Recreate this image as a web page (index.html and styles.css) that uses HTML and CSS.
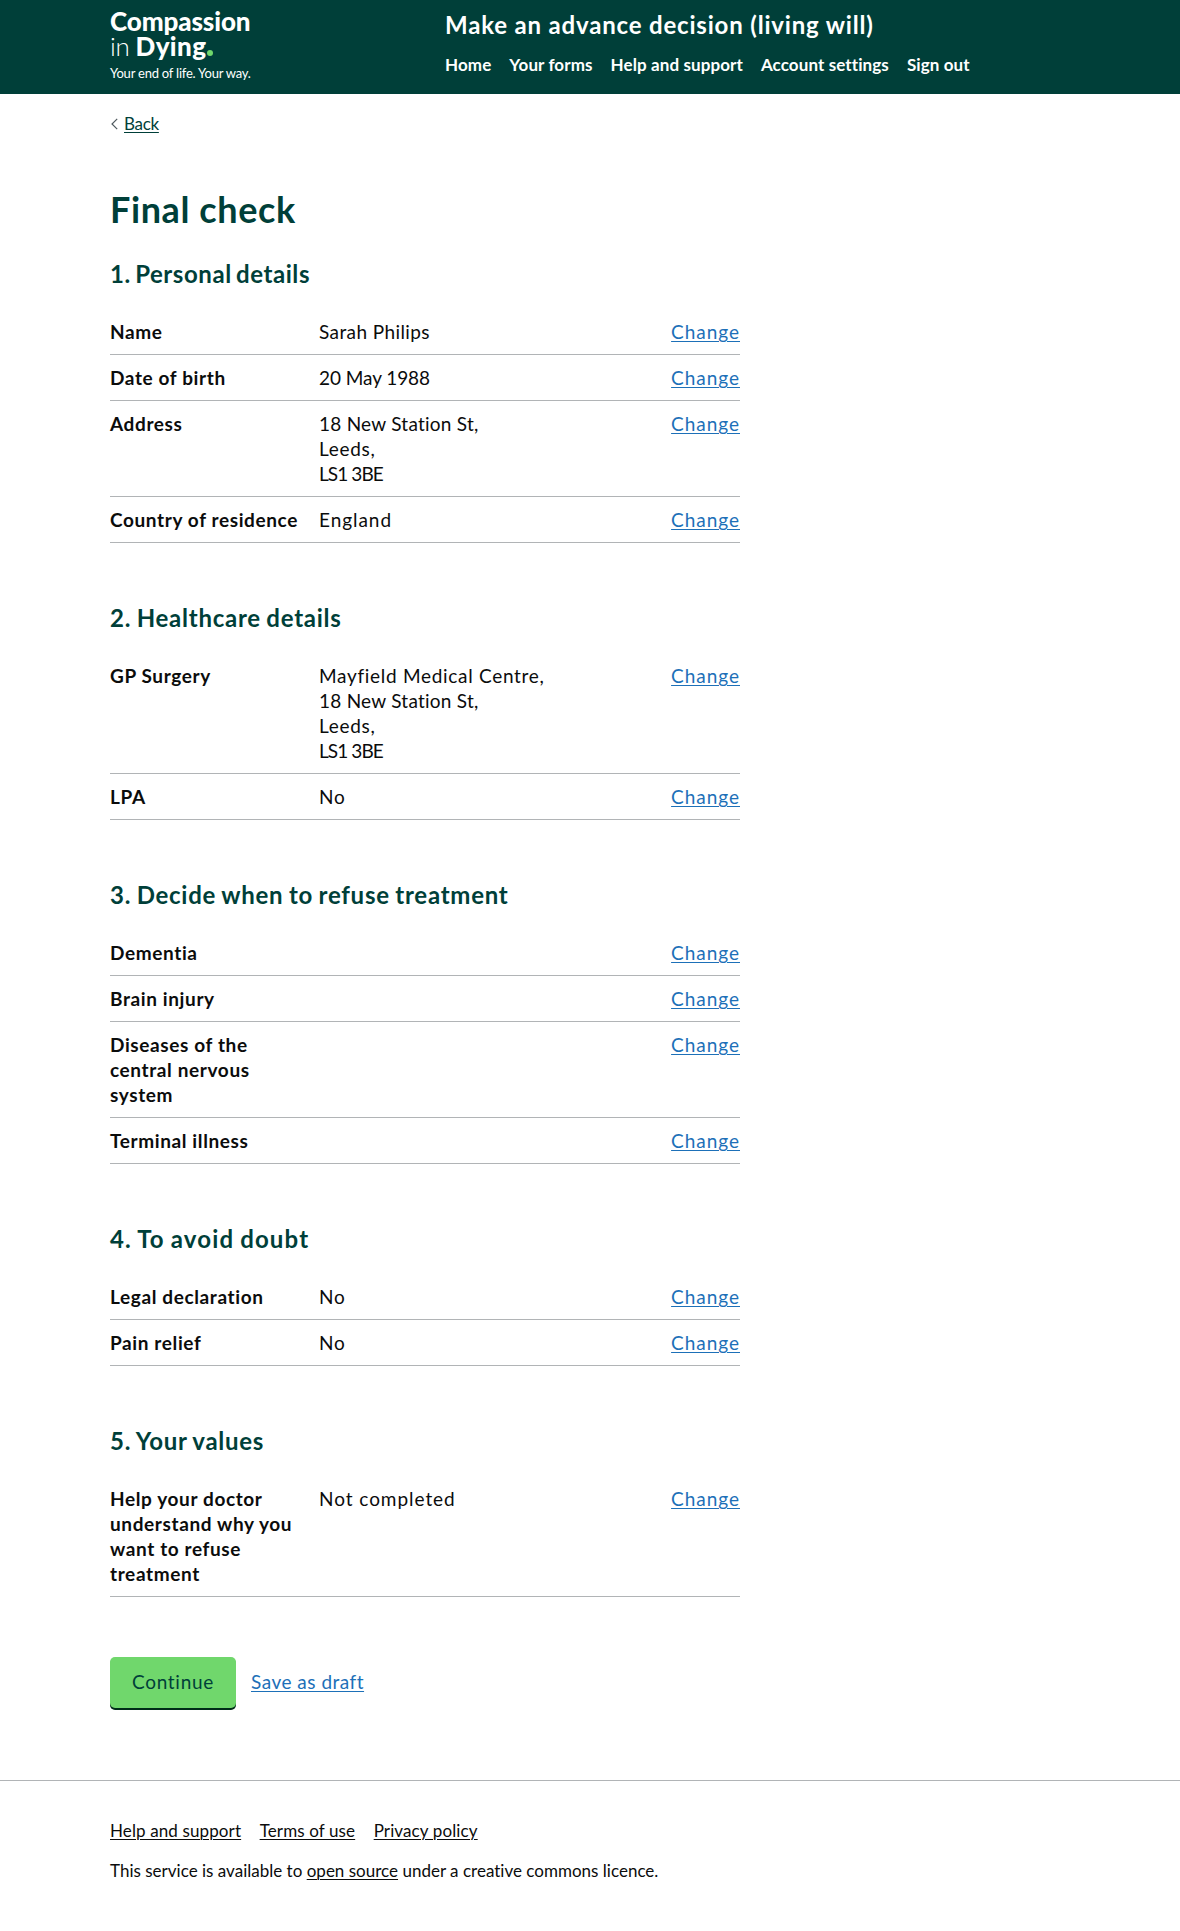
FILE: index.html
```html
<!DOCTYPE html>
<html lang="en">
<head>
<meta charset="utf-8">
<title>Final check – Make an advance decision (living will)</title>
<link rel="stylesheet" href="styles.css">
</head>
<body>
<header class="header">
  <div class="container header__inner">
    <a class="logo" href="#">
      <span class="logo__name">Compassion</span>
      <span class="logo__name"><span class="logo__light">in</span> <span class="logo__dying">Dying</span><span class="logo__dot"></span></span>
      <span class="logo__tagline">Your end of life. Your way.</span>
    </a>
    <div class="header__content">
      <a class="header__service" href="#">Make an advance decision (living will)</a>
      <nav class="nav">
        <a href="#">Home</a>
        <a href="#">Your forms</a>
        <a href="#">Help and support</a>
        <a href="#">Account settings</a>
        <a href="#">Sign out</a>
      </nav>
    </div>
  </div>
</header>

<div class="container">
  <a class="back" href="#"><svg class="back__icon" width="7" height="12" viewBox="0 0 7 12"><path d="M6.2 .8 1 6l5.2 5.2" fill="none" stroke="#505a5f" stroke-width="1.2"/></svg><span class="back__text">Back</span></a>

  <main class="main">
    <h1 class="title">Final check</h1>

    <section class="section">
      <h2 class="section__title section__title--personal">1. Personal details</h2>
      <dl class="summary">
        <div class="row"><dt class="key">Name</dt><dd class="value value--name">Sarah Philips</dd><dd class="action"><a class="link change" href="#">Change</a></dd></div>
        <div class="row"><dt class="key">Date of birth</dt><dd class="value value--date">20 May 1988</dd><dd class="action"><a class="link change" href="#">Change</a></dd></div>
        <div class="row"><dt class="key">Address</dt><dd class="value"><span class="street">18 New Station St,</span><br>Leeds,<br><span class="postcode">LS1 3BE</span></dd><dd class="action"><a class="link change" href="#">Change</a></dd></div>
        <div class="row"><dt class="key">Country of residence</dt><dd class="value value--wide">England</dd><dd class="action"><a class="link change" href="#">Change</a></dd></div>
      </dl>
    </section>

    <section class="section">
      <h2 class="section__title">2. Healthcare details</h2>
      <dl class="summary">
        <div class="row"><dt class="key">GP Surgery</dt><dd class="value">Mayfield Medical Centre,<br><span class="street">18 New Station St,</span><br>Leeds,<br><span class="postcode">LS1 3BE</span></dd><dd class="action"><a class="link change" href="#">Change</a></dd></div>
        <div class="row"><dt class="key">LPA</dt><dd class="value">No</dd><dd class="action"><a class="link change" href="#">Change</a></dd></div>
      </dl>
    </section>

    <section class="section">
      <h2 class="section__title">3. Decide when to refuse treatment</h2>
      <dl class="summary">
        <div class="row"><dt class="key">Dementia</dt><dd class="value"></dd><dd class="action"><a class="link change" href="#">Change</a></dd></div>
        <div class="row"><dt class="key">Brain injury</dt><dd class="value"></dd><dd class="action"><a class="link change" href="#">Change</a></dd></div>
        <div class="row"><dt class="key">Diseases of the central nervous system</dt><dd class="value"></dd><dd class="action"><a class="link change" href="#">Change</a></dd></div>
        <div class="row"><dt class="key">Terminal illness</dt><dd class="value"></dd><dd class="action"><a class="link change" href="#">Change</a></dd></div>
      </dl>
    </section>

    <section class="section">
      <h2 class="section__title section__title--doubt">4. To avoid doubt</h2>
      <dl class="summary">
        <div class="row"><dt class="key">Legal declaration</dt><dd class="value">No</dd><dd class="action"><a class="link change" href="#">Change</a></dd></div>
        <div class="row"><dt class="key">Pain relief</dt><dd class="value">No</dd><dd class="action"><a class="link change" href="#">Change</a></dd></div>
      </dl>
    </section>

    <section class="section">
      <h2 class="section__title">5. Your values</h2>
      <dl class="summary">
        <div class="row"><dt class="key">Help your doctor understand why you want to refuse treatment</dt><dd class="value value--wide">Not completed</dd><dd class="action"><a class="link change" href="#">Change</a></dd></div>
      </dl>
    </section>

    <div class="actions">
      <button class="button" type="button">Continue</button>
      <a class="link draft" href="#">Save as draft</a>
    </div>
  </main>
</div>

<footer class="footer">
  <div class="container">
    <div class="footer__links">
      <a href="#">Help and support</a>
      <a href="#">Terms of use</a>
      <a href="#">Privacy policy</a>
    </div>
    <p class="footer__note">This service is available to <a href="#">open source</a> under a creative commons licence.</p>
  </div>
</footer>
</body>
</html>
```
FILE: styles.css
```css
* { box-sizing: border-box; }

body {
  margin: 0;
  background: #fff;
  color: #0b0c0c;
  font: 400 19px/25px "Lato", "Open Sans", sans-serif;
  letter-spacing: .7px;
}

h1, h2, dl, dd, p { margin: 0; }

.container {
  width: 960px;
  margin: 0 auto;
}

/* Header */
.header {
  height: 94px;
  background: #003f39;
  color: #fff;
}

.header a {
  color: inherit;
  text-decoration: none;
}

.header__inner { display: flex; }

.logo {
  display: flex;
  flex-direction: column;
  width: 335px;
  padding-top: 9px;
}

.logo__name {
  font-size: 26px;
  font-weight: 900;
  line-height: 25px;
  letter-spacing: -.1px;
  white-space: nowrap;
}

.logo__light {
  font-weight: 300;
  letter-spacing: -.3px;
}

.logo__dying { letter-spacing: .4px; }

.logo__dot {
  display: inline-block;
  width: 6px;
  height: 6px;
  margin-left: 1px;
  border-radius: 50%;
  background: #70d76c;
}

.logo__tagline {
  margin-top: 6px;
  font-size: 13px;
  line-height: 16px;
  letter-spacing: -.22px;
}

.header__content { padding-top: 10px; }

.header__service {
  display: block;
  font-size: 24px;
  font-weight: 700;
  line-height: 30px;
  letter-spacing: .82px;
}

.nav {
  display: flex;
  gap: 18px;
  margin-top: 15px;
  font-size: 17px;
  font-weight: 700;
  line-height: 20px;
  letter-spacing: .1px;
}

/* Back link */
.back {
  display: flex;
  align-items: center;
  width: max-content;
  margin-top: 20px;
  color: #003f39;
  font-size: 17px;
  line-height: 20px;
  letter-spacing: -.3px;
  text-decoration: none;
}

.back__icon { margin: 0 6px 0 1px; }

.back__text {
  text-decoration: underline;
  text-decoration-thickness: 1px;
  text-underline-offset: 2px;
}

/* Summary sections */
.main {
  width: 630px;
  padding-top: 55px;
}

.title {
  margin-bottom: 30px;
  color: #003f39;
  font-size: 36px;
  font-weight: 700;
  line-height: 40px;
  letter-spacing: .6px;
}

.section { margin-bottom: 60px; }

.section__title {
  margin-bottom: 20px;
  color: #003f39;
  font-size: 24px;
  font-weight: 700;
  line-height: 30px;
  letter-spacing: .74px;
  word-spacing: -1px;
}

.section__title--personal {
  letter-spacing: .56px;
  word-spacing: -2px;
}

.section__title--doubt { letter-spacing: 1.15px; }

.row {
  display: grid;
  grid-template-columns: 189px 1fr auto;
  column-gap: 20px;
  padding: 10px 0;
  border-bottom: 1px solid #b1b4b6;
}

.key {
  font-weight: 700;
  letter-spacing: .62px;
}

.value--name { letter-spacing: .4px; }
.value--date { letter-spacing: -.07px; }
.value--wide { letter-spacing: .95px; }
.street { letter-spacing: .25px; }
.postcode { letter-spacing: -.9px; }

.link {
  color: #1d70b8;
  text-decoration: underline;
  text-decoration-thickness: 1px;
  text-underline-offset: 2px;
}

.change { letter-spacing: .97px; }

/* Form actions */
.actions {
  display: flex;
  align-items: center;
  gap: 15px;
}

.button {
  width: 126px;
  height: 51px;
  padding: 0 0 2px;
  border: 0;
  border-radius: 5px;
  background: #70d76c;
  box-shadow: 0 2px 0 #002d18;
  color: #003f39;
  font: inherit;
  letter-spacing: .7px;
}

.draft {
  padding-bottom: 2px;
  letter-spacing: .5px;
}

/* Footer */
.footer {
  margin-top: 72px;
  padding-top: 40px;
  border-top: 1px solid #b1b4b6;
  font-size: 17px;
  line-height: 20px;
  letter-spacing: .12px;
}

.footer a {
  color: inherit;
  text-underline-offset: 2px;
  text-decoration-thickness: 1px;
}

.footer__links {
  display: flex;
  gap: 18.5px;
  margin-bottom: 20px;
}

.footer__note { letter-spacing: .01px; }
```
